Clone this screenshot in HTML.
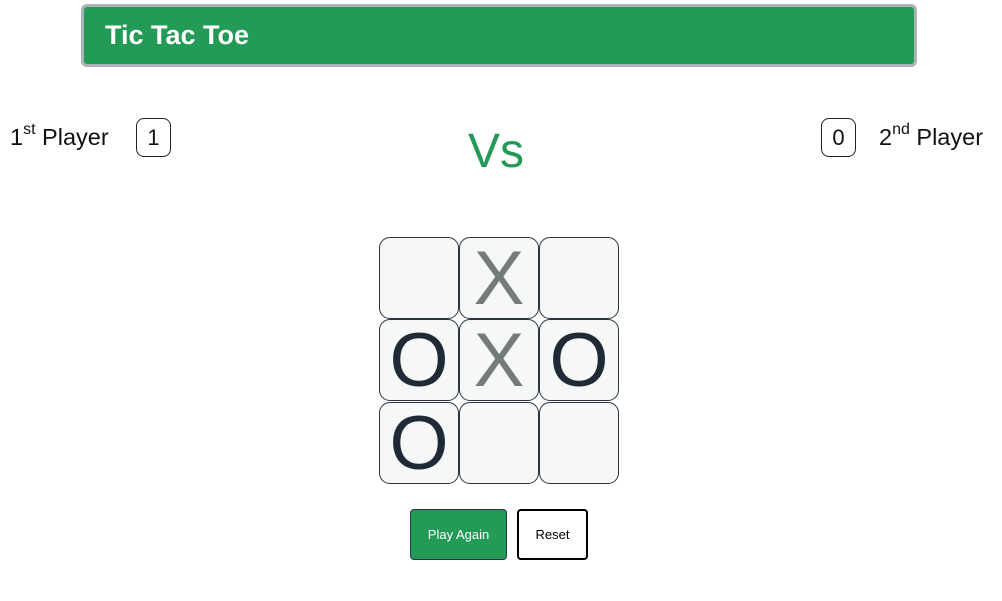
<!DOCTYPE html>
<html><head><style>
body{margin:0;width:1002px;height:601px;background:#fff;font-family:"Liberation Sans",Arial,sans-serif;position:relative;overflow:hidden}
.abs{position:absolute}
.hdr{left:81px;top:4px;width:830px;height:57px;background:#239b56;border:3px solid #adb1b8;border-radius:6px}
.hdr span{position:absolute;left:21px;top:13px;color:#fff;font-weight:bold;font-size:27px}
.pl{font-size:23.5px;color:#111;top:123px}
.pl sup{font-size:16px;position:relative;top:-2px}
.sb{width:33px;height:37px;border:1px solid #222;border-radius:8px;font-size:22px;text-align:center;line-height:37px;top:118px;color:#111}
.vs{left:468px;top:124px;font-size:48px;color:#239b56}
.c{background:#f6f7f7;border:1px solid #2b3440;border-radius:11px;box-sizing:border-box;width:80px;height:82px;text-align:center;font-size:76px;line-height:82px}
.x{color:#737c79}.o{color:#1f2a36}
.btn{top:509px;height:51px;box-sizing:border-box;border-radius:4px;font-size:13px;text-align:center}
</style></head><body>
<div class="abs hdr"><span>Tic Tac Toe</span></div>
<div class="abs pl" style="left:10px">1<sup>st</sup> Player</div>
<div class="abs sb" style="left:136px">1</div>
<div class="abs vs">Vs</div>
<div class="abs sb" style="left:821px">0</div>
<div class="abs pl" style="left:879px">2<sup>nd</sup> Player</div>

<div class="abs c" style="left:379px;top:237px"></div>
<div class="abs c x" style="left:459px;top:237px">X</div>
<div class="abs c" style="left:539px;top:237px"></div>
<div class="abs c o" style="left:379px;top:319px">O</div>
<div class="abs c x" style="left:459px;top:319px">X</div>
<div class="abs c o" style="left:539px;top:319px">O</div>
<div class="abs c o" style="left:379px;top:402px">O</div>
<div class="abs c" style="left:459px;top:402px"></div>
<div class="abs c" style="left:539px;top:402px"></div>

<div class="abs btn" style="left:410px;width:97px;background:#239b56;border:1px solid #2b3440;color:#fff;line-height:49px">Play Again</div>
<div class="abs btn" style="left:517px;width:71px;background:#fff;border:2px solid #000;color:#000;line-height:47px">Reset</div>
</body></html>
